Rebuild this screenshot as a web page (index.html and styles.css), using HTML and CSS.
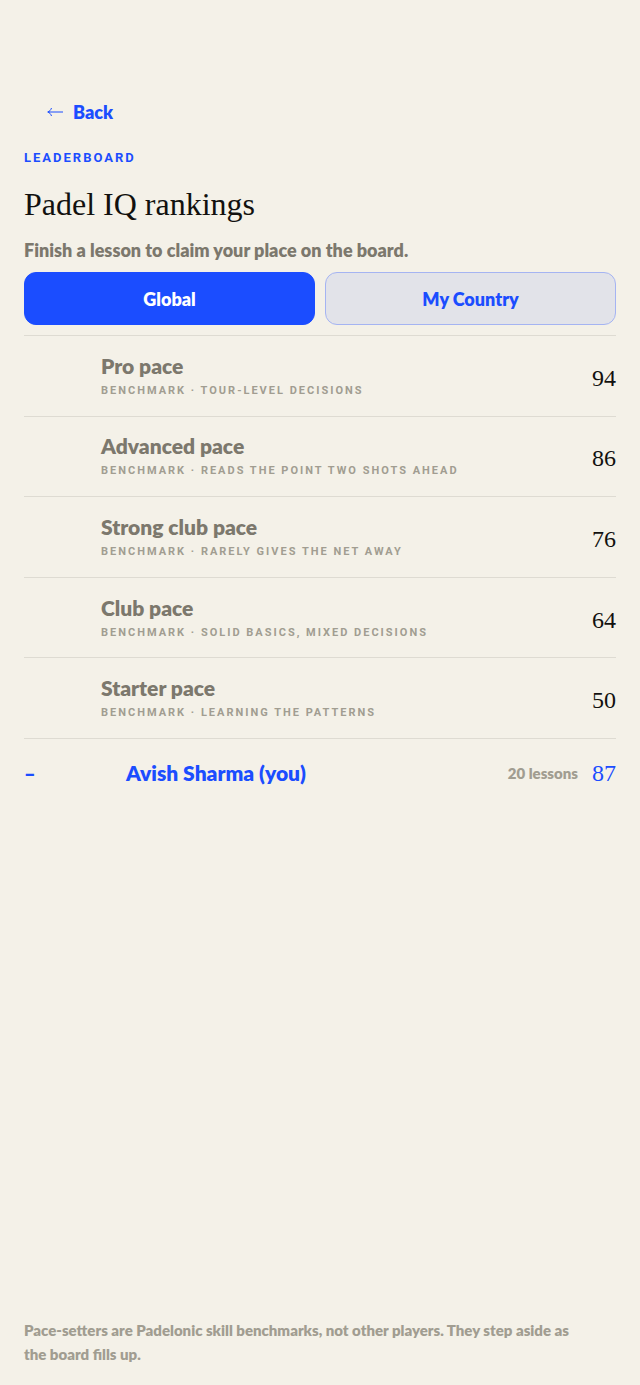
FILE: index.html
```html
<!DOCTYPE html>
<html lang="en">
<head>
  <meta charset="UTF-8" />
  <meta name="viewport" content="width=device-width, initial-scale=1.0">
  <title>Padel IQ rankings</title>
  <link rel="stylesheet" href="styles.css">
</head>
<body>
  <main class="screen">
    <a class="back" href="#">
      <svg class="back-arrow" viewBox="0 0 16 10" aria-hidden="true">
        <path d="M16 5H1M4.500 1C3.800 3 2.600 4.500 0.700 5C2.600 5.500 3.800 7 4.500 9" />
      </svg>
      Back
    </a>

    <header>
      <div class="eyebrow">LEADERBOARD</div>
      <h1>Padel IQ rankings</h1>
      <p class="intro">Finish a lesson to claim your place on the board.</p>
    </header>

    <div class="tabs">
      <button class="tab active" type="button" aria-pressed="true">Global</button>
      <button class="tab" type="button" aria-pressed="false">My Country</button>
    </div>

    <ul class="board">
      <li class="row">
        <div class="pace">
          <div class="name">Pro pace</div>
          <div class="detail">BENCHMARK · TOUR-LEVEL DECISIONS</div>
        </div>
        <span class="score">94</span>
      </li>
      <li class="row">
        <div class="pace">
          <div class="name">Advanced pace</div>
          <div class="detail">BENCHMARK · READS THE POINT TWO SHOTS AHEAD</div>
        </div>
        <span class="score">86</span>
      </li>
      <li class="row">
        <div class="pace">
          <div class="name">Strong club pace</div>
          <div class="detail">BENCHMARK · RARELY GIVES THE NET AWAY</div>
        </div>
        <span class="score">76</span>
      </li>
      <li class="row">
        <div class="pace">
          <div class="name">Club pace</div>
          <div class="detail">BENCHMARK · SOLID BASICS, MIXED DECISIONS</div>
        </div>
        <span class="score">64</span>
      </li>
      <li class="row">
        <div class="pace">
          <div class="name">Starter pace</div>
          <div class="detail">BENCHMARK · LEARNING THE PATTERNS</div>
        </div>
        <span class="score">50</span>
      </li>
    </ul>

    <div class="you">
      <span class="rank">–</span>
      <span class="name">Avish Sharma (you)</span>
      <span class="lessons">20 lessons</span>
      <span class="score">87</span>
    </div>

    <p class="note">Pace-setters are Padelonic skill benchmarks, not other players. They step aside as the board fills up.</p>
  </main>
</body>
</html>
```
FILE: styles.css
```css
* { box-sizing: border-box; }
body {
  margin: 0; background-color: #f4f1e8; color: #12110f;
  font-family: Lato, sans-serif; font-weight: 800;
}
h1, p, ul { margin: 0; padding: 0; }

.screen {
  min-height: 100vh; padding: 100px 24px 19px;
  display: flex; flex-direction: column;
}
.back {
  display: flex; align-items: center; gap: 10px; align-self: flex-start;
  margin-left: 23px; color: #1b4dff; font-size: 18px; line-height: 24px;
  text-decoration: none;
}
.back-arrow { width: 16px; height: 10px; fill: none; stroke: #1b4dff; stroke-width: 1; }

.eyebrow {
  margin-top: 24px; color: #1b4dff; font-family: Roboto, sans-serif;
  font-size: 13px; font-weight: 700; line-height: 20px; letter-spacing: 2px;
}
h1 {
  margin-top: 12px; font-family: "Liberation Serif", serif;
  font-size: 32px; font-weight: 400; line-height: 48px;
}
.intro { margin-top: 10px; color: #7c786d; font-size: 18px; line-height: 24px; }

.tabs { display: grid; grid-template-columns: 1fr 1fr; gap: 10px; margin-top: 10px; }
.tab {
  height: 53px; border: 1px solid #a5b4f2; border-radius: 12px;
  background-color: #e2e3e9; color: #1b4dff;
  font: inherit; font-size: 18px; cursor: pointer;
}
.tab.active { background-color: #1b4dff; border-color: #1b4dff; color: #fff; }

.board {
  display: grid; grid-auto-rows: 1fr; min-height: 404px; margin-top: 10px;
  border-top: 1px solid #dedbd2; list-style: none;
}
.row {
  display: flex; align-items: center; justify-content: space-between;
  padding: 4px 0 0 77px; border-bottom: 1px solid #dedbd2;
}
.name { font-size: 21px; line-height: 26px; }
.row .name { color: #7c786d; }
.detail {
  color: #a19d91; font-family: Roboto, sans-serif;
  font-size: 11px; font-weight: 700; line-height: 24px; letter-spacing: 2px;
}
.score {
  font-family: "Liberation Serif", serif; font-size: 24px;
  font-weight: 400; line-height: 32px;
}

.you { display: flex; align-items: center; padding-top: 18px; color: #1b4dff; }
.rank { width: 102px; font-size: 20px; }
.lessons { margin: 0 14px 0 auto; color: #a19d91; font-size: 15px; }

.note {
  margin-top: auto; padding-right: 24px; color: #a19d91;
  font-size: 15px; line-height: 24px;
}
```
